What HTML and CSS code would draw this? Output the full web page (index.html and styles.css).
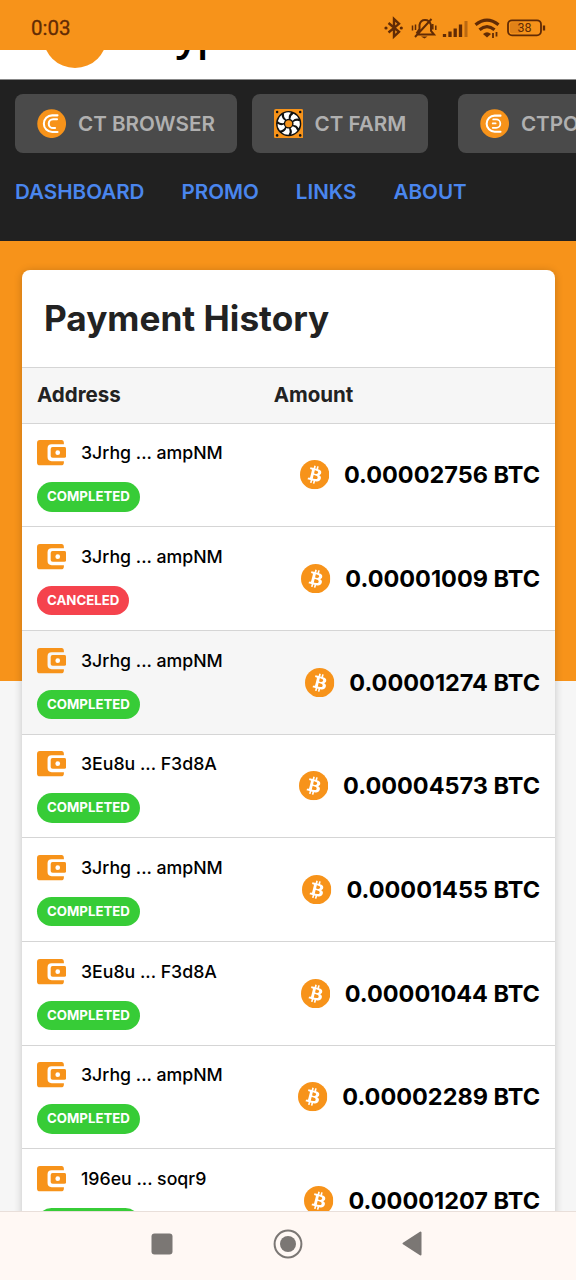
FILE: index.html
```html
<!DOCTYPE html>
<html lang="en">
<head>
<meta charset="utf-8">
<title>Payment History</title>
<link rel="stylesheet" href="styles.css">
</head>
<body>
<svg class="defs" aria-hidden="true">
  <symbol id="wallet" viewBox="0 0 30 30">
    <path fill="#f7931a" d="M3 2H25Q27.500 2 27.500 5V6.300H15Q10.800 6.300 10.800 10.500V19.500Q10.800 23.700 15 23.700H27.500V25Q27.500 28 24.500 28H3Q0 28 0 25V5Q0 2 3 2Z"/>
    <path fill="#f7931a" d="M16 9.300H28Q29.700 9.300 29.700 10.800V18.800Q29.700 20.300 28 20.300H16Q14 20.300 14 18.500V11.200Q14 9.300 16 9.300Z"/>
    <circle cx="21.200" cy="15" r="2.400" fill="#fff"/>
  </symbol>
  <symbol id="btc" viewBox="0 0 32 32">
    <circle cx="16" cy="16" r="16" fill="#f7931a"/>
    <path fill="#fff" fill-rule="evenodd" d="M23.189 14.020c.314-2.096-1.283-3.223-3.465-3.975l.708-2.840-1.728-.430-.690 2.765c-.454-.114-.920-.220-1.385-.326l.695-2.783L15.596 6l-.708 2.839c-.376-.086-.746-.170-1.104-.260l.002-.009-2.384-.595-.460 1.846s1.283.294 1.256.312c.700.175.826.638.805 1.006l-.806 3.235c.048.012.110.030.180.057l-.183-.045-1.130 4.532c-.086.212-.303.531-.793.410.018.025-1.256-.313-1.256-.313l-.858 1.978 2.250.561c.418.105.828.215 1.231.318l-.715 2.872 1.727.430.708-2.840c.472.127.930.245 1.378.357l-.706 2.828 1.728.430.715-2.866c2.948.558 5.164.333 6.097-2.333.752-2.146-.037-3.385-1.588-4.192 1.130-.260 1.980-1.003 2.207-2.538zm-3.950 5.538c-.533 2.147-4.148.986-5.320.695l.950-3.805c1.172.293 4.929.872 4.370 3.110zm.535-5.569c-.487 1.953-3.495.960-4.470.717l.860-3.450c.975.243 4.118.696 3.610 2.733z"/>
  </symbol>
</svg>
<div class="screen">
  <div class="status">
    <span class="clock">0:03</span>
    <svg class="status-icons" viewBox="0 0 162 24" fill="none" stroke="#612b05" stroke-width="2">
      <path d="M4.500 7L15 15.800L10 20.500V3L15 7.800L4.500 16.500" stroke-width="2.400"/>
      <circle cx="2" cy="12" r="1.600" fill="#612b05" stroke="none"/>
      <circle cx="17.300" cy="12" r="1.600" fill="#612b05" stroke="none"/>
      <path d="M34 18.500H50L47 15V9Q45.500 4 41 4Q36.500 4 35.500 9V13L32.500 17.500M47.500 3L31 21" stroke-width="2"/>
      <path d="M28.500 9.500V14.500M31.500 8.500V14M48.800 8V13.500M51.800 9.500V14" stroke-width="1.500"/>
      <path d="M37 20.500H43.500L40.500 22.500Z" fill="#612b05" stroke="none"/>
      <path d="M60.500 21V18M66 21V15.500M71.200 21V12.500M76.500 21V8.500" stroke-width="3.300"/>
      <path d="M82 21V5" stroke-width="3" opacity=".4"/>
      <path d="M91.500 8.800Q103 -.500 114.500 8.800M95.500 13.800Q103 7.500 110.500 13.800" stroke-width="3.200"/>
      <path d="M99 18Q103 14.500 107 18L103 21.500Z" fill="#612b05" stroke="none"/>
      <path d="M109 17V22M112.500 16V20.500" stroke-width="1.800"/>
      <rect x="124" y="4.300" width="33" height="15" rx="4" stroke-width="1.800"/>
      <rect x="126" y="6.300" width="11" height="11" rx="2" fill="#cf7415" stroke="none" opacity=".55"/>
      <path d="M160 9.500V14.500" stroke-width="2.300"/>
      <text x="140.500" y="16" text-anchor="middle">38</text>
    </svg>
  </div>
  <header class="brand">
    <svg class="brand-logo" viewBox="0 0 64 64"><circle cx="32" cy="32" r="32" fill="#f7931a"/></svg>
    <span class="brand-name">CryptoTab</span>
  </header>
  <nav class="nav">
    <div class="apps">
      <a class="app">
        <svg class="icon" viewBox="0 0 30 30" fill="none" stroke="#fff" stroke-linecap="round">
          <circle cx="15" cy="15" r="14.700" fill="#f7931a" stroke="none"/>
          <path d="M21 6.500H15.500A8.500 8.500 0 0 0 15.500 23.500H21" stroke-width="2.100"/>
          <path d="M20.500 10.500H16.500A4.500 4.500 0 0 0 16.500 19.500H18.500" stroke-width="2.100"/>
        </svg>CT BROWSER</a>
      <a class="app">
        <svg class="icon" viewBox="-15 -15 30 30">
          <rect x="-15" y="-15" width="30" height="30" rx="2" fill="#f7931a"/>
          <g fill="#111"><circle cx="-11.800" cy="-12" r="1.300"/><circle cx="11.800" cy="-12" r="1.300"/><circle cx="-11.800" cy="12" r="1.300"/><circle cx="11.800" cy="12" r="1.300"/><circle r="12.900"/></g>
          <path id="blade" fill="#fff" d="M-2.600 -4.300Q-5.400 -6.800 -4.900 -10.300Q-1 -12.300 2.400 -11.100Q-.600 -8.500 .200 -5Q-1.300 -5 -2.600 -4.300Z"/>
          <use href="#blade" transform="rotate(51.430)"/><use href="#blade" transform="rotate(102.860)"/><use href="#blade" transform="rotate(154.290)"/><use href="#blade" transform="rotate(205.710)"/><use href="#blade" transform="rotate(257.140)"/><use href="#blade" transform="rotate(308.570)"/>
          <circle r="3.600" fill="#f7931a"/>
        </svg>CT FARM</a>
      <a class="app app-pool">
        <svg class="icon" viewBox="0 0 30 30" fill="none" stroke="#fff" stroke-linecap="round">
          <circle cx="15" cy="15" r="14.700" fill="#f7931a" stroke="none"/>
          <path d="M21 6.800H15A8.200 8.200 0 0 0 15 23.200H21" stroke-width="2.100"/>
          <path d="M13.500 10.700H16.500A4.300 4.300 0 0 1 16.500 19.300H13M13 14.800H16" stroke-width="1.800"/>
        </svg>CTPOOL</a>
    </div>
    <div class="links"><a>DASHBOARD</a><a>PROMO</a><a>LINKS</a><a>ABOUT</a></div>
  </nav>
  <main class="content">
    <section class="card">
      <h1 class="title">Payment History</h1>
      <div class="thead"><span class="col-address">Address</span><span>Amount</span></div>
      <div class="row"><div><div class="address"><svg class="icon"><use href="#wallet"/></svg>3Jrhg ... ampNM</div><span class="badge">COMPLETED</span></div><div class="amount"><svg class="icon"><use href="#btc"/></svg>0.00002756 BTC</div></div>
      <div class="row"><div><div class="address"><svg class="icon"><use href="#wallet"/></svg>3Jrhg ... ampNM</div><span class="badge canceled">CANCELED</span></div><div class="amount"><svg class="icon"><use href="#btc"/></svg>0.00001009 BTC</div></div>
      <div class="row active"><div><div class="address"><svg class="icon"><use href="#wallet"/></svg>3Jrhg ... ampNM</div><span class="badge">COMPLETED</span></div><div class="amount"><svg class="icon"><use href="#btc"/></svg>0.00001274 BTC</div></div>
      <div class="row"><div><div class="address"><svg class="icon"><use href="#wallet"/></svg>3Eu8u ... F3d8A</div><span class="badge">COMPLETED</span></div><div class="amount"><svg class="icon"><use href="#btc"/></svg>0.00004573 BTC</div></div>
      <div class="row"><div><div class="address"><svg class="icon"><use href="#wallet"/></svg>3Jrhg ... ampNM</div><span class="badge">COMPLETED</span></div><div class="amount"><svg class="icon"><use href="#btc"/></svg>0.00001455 BTC</div></div>
      <div class="row"><div><div class="address"><svg class="icon"><use href="#wallet"/></svg>3Eu8u ... F3d8A</div><span class="badge">COMPLETED</span></div><div class="amount"><svg class="icon"><use href="#btc"/></svg>0.00001044 BTC</div></div>
      <div class="row"><div><div class="address"><svg class="icon"><use href="#wallet"/></svg>3Jrhg ... ampNM</div><span class="badge">COMPLETED</span></div><div class="amount"><svg class="icon"><use href="#btc"/></svg>0.00002289 BTC</div></div>
      <div class="row"><div><div class="address"><svg class="icon"><use href="#wallet"/></svg>196eu ... soqr9</div><span class="badge">COMPLETED</span></div><div class="amount"><svg class="icon"><use href="#btc"/></svg>0.00001207 BTC</div></div>
    </section>
  </main>
  <div class="system-nav">
    <svg viewBox="0 0 22 22"><rect x=".500" y=".500" width="21" height="21" rx="3"/></svg>
    <svg class="home" viewBox="0 0 30 30"><circle cx="15" cy="15" r="13.400" fill="none" stroke="#7b7774" stroke-width="2"/><circle cx="15" cy="15" r="8"/></svg>
    <svg class="back" viewBox="0 0 20 25"><path d="M18.500 1.500V23.500L1.500 12.500Z" stroke="#7b7774" stroke-width="2" stroke-linejoin="round"/></svg>
  </div>
</div>
</body>
</html>
```
FILE: styles.css
```css
* { box-sizing: border-box; }
body { margin: 0; font-family: Inter, "Liberation Sans", sans-serif; color: #000; }
.defs { display: none; }
.screen { display: flex; flex-direction: column; height: 1280px; width: 576px; overflow: hidden; }
.status { flex: none; height: 50px; background: #f7931a; display: flex; align-items: center; justify-content: space-between; padding: 5px 30px 0 31px; }
.clock { font: 400 20.500px Roboto, sans-serif; color: #612b05; -webkit-text-stroke: .3px #612b05; }
.status-icons { width: 162px; height: 24px; }
.status-icons text { font: 400 12.500px Roboto, sans-serif; fill: #612b05; stroke: none; }
.brand { flex: none; height: 30px; background: #fff; border-bottom: 1px solid #888; overflow: hidden; display: flex; align-items: flex-end; padding: 0 0 11px 43px; gap: 27px; }
.brand-logo { flex: none; width: 64px; height: 64px; }
.brand-name { font-family: "Open Sans", sans-serif; font-size: 42px; font-weight: 600; line-height: 50px; letter-spacing: -1.500px; height: 50px; margin-bottom: 9px; }
.nav { flex: none; height: 161px; background: #212121; padding: 14px 0 0 15px; overflow: hidden; }
.apps { display: flex; gap: 14.670px; }
.app { flex: none; display: flex; align-items: center; gap: 11.600px; height: 59px; padding: 0 22px; border-radius: 8px; background: #4a4a4a; color: #b0b0b0; font-size: 20.650px; font-weight: 600; }
.app-pool { margin-left: 15px; }
.icon { flex: none; width: 29.330px; height: 29.330px; display: block; }
.links { display: flex; gap: 37px; margin-top: 26px; color: #4a86ee; font-size: 20.600px; font-weight: 600; line-height: 25px; }
.content { flex: 1; min-height: 0; overflow: hidden; background: linear-gradient(#f7931a 440px, #f6f6f6 440px); padding: 29px 21px 0 22px; }
.card { background: #fff; border-radius: 8px; overflow: hidden; box-shadow: 0 1px 8px rgba(0, 0, 0, .2); }
.title { margin: 0; height: 97px; padding: 0 22px; font-size: 35.200px; font-weight: 700; line-height: 97px; color: #222; }
.thead { display: flex; align-items: center; height: 55.500px; padding: 0 15px 1px; border-top: 1px solid #d5d5d5; background: #f6f6f6; font-size: 20.530px; font-weight: 700; color: #222; }
.col-address { width: 236.700px; }
.row { display: flex; align-items: center; justify-content: space-between; height: 103.700px; padding: 0 15px; border-top: 1px solid #d5d5d5; }
.active { background: #f6f6f6; }
.address { display: flex; align-items: center; gap: 14.670px; margin-bottom: 14.670px; font-size: 17.730px; font-weight: 500; }
.badge { display: block; width: max-content; height: 29.330px; padding: 0 10px; border-radius: 15px; background: #37cc37; color: #fff; font-size: 13.250px; font-weight: 700; line-height: 29px; }
.canceled { background: #f5434d; }
.amount { display: flex; align-items: center; gap: 14.670px; font-size: 23.470px; font-weight: 700; }
.system-nav { flex: none; height: 69px; display: flex; align-items: center; padding: 0 0 5px 151px; background: #fff8f4; border-top: 1px solid #e9dfda; }
.system-nav svg { width: 22px; height: 22px; fill: #7b7774; }
.system-nav .home { width: 30px; height: 30px; margin-left: 99.500px; }
.system-nav .back { width: 20px; height: 25px; margin-left: 99.500px; }
```
